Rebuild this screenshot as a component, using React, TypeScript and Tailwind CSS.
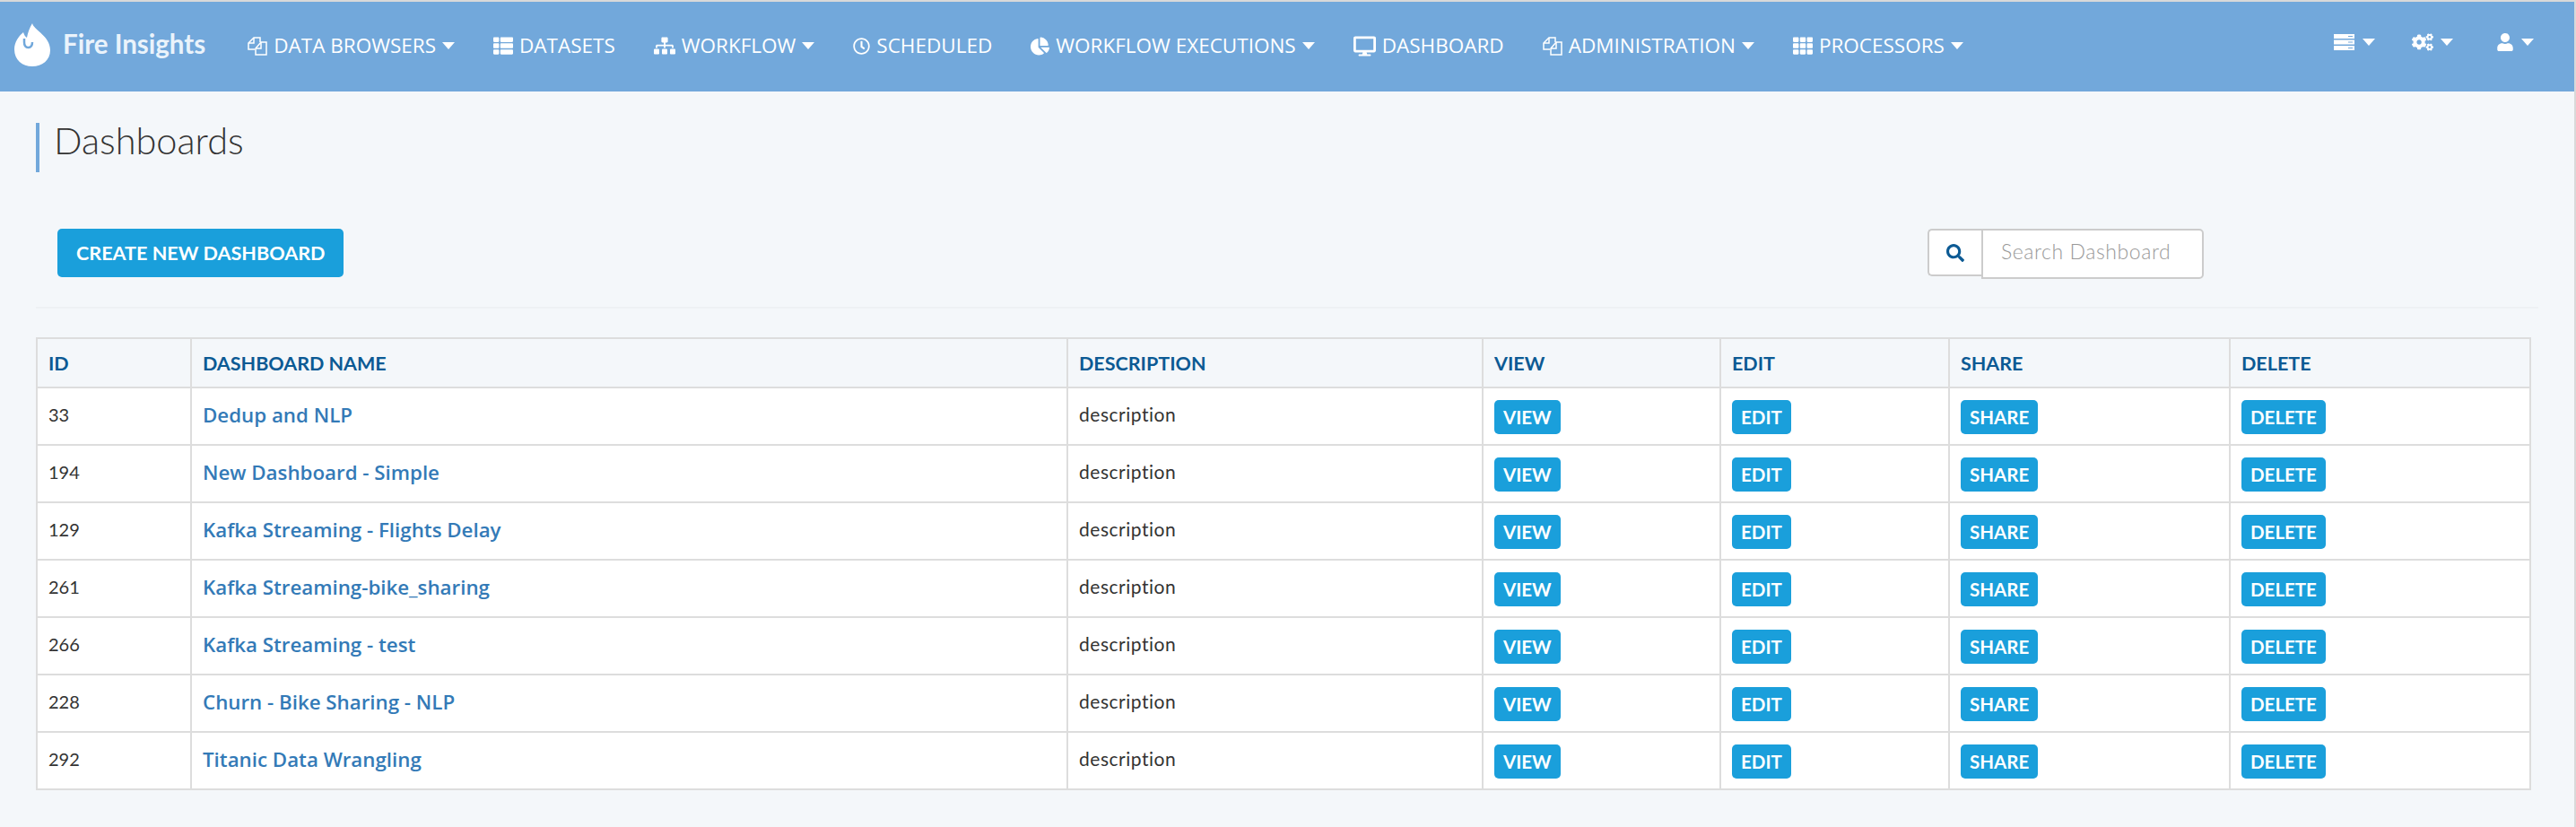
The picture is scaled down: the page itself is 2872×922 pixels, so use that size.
import { FaThList, FaSitemap, FaRegClock, FaChartPie, FaDesktop, FaTh, FaCogs, FaUser, FaSearch } from 'react-icons/fa'
import type { ReactNode } from 'react'

const rows = [
  { id: 33, name: 'Dedup and NLP' },
  { id: 194, name: 'New Dashboard - Simple' },
  { id: 129, name: 'Kafka Streaming - Flights Delay' },
  { id: 261, name: 'Kafka Streaming-bike_sharing' },
  { id: 266, name: 'Kafka Streaming - test' },
  { id: 228, name: 'Churn - Bike Sharing - NLP' },
  { id: 292, name: 'Titanic Data Wrangling' },
]

function FilesIcon() {
  return (
    <svg width="22" height="21" viewBox="0 0 22 21" fill="none" stroke="white" strokeWidth="1.5">
      <path d="M14 6V1H7L1 7V14H8" />
      <path d="M7 1V7H1" />
      <path d="M9 13L15 6H21V20H9Z" />
      <path d="M15 6V13H9" />
    </svg>
  )
}

function ServerIcon() {
  return (
    <svg width="23" height="18" viewBox="0 0 23 18" fill="white">
      <path fillRule="evenodd" d="M0 0H23V5H0ZM16 2V3H21V2ZM0 6.5H23V11.500H0ZM16 8.500V9.500H21V8.500ZM0 13H23V18H0ZM16 15V16H21V15Z" />
    </svg>
  )
}

function Caret() {
  return <span className="inline-block h-0 w-0 border-x-[7px] border-t-[8px] border-x-transparent border-t-white" />
}

function NavItem({ icon, label, caret }: { icon: ReactNode; label: string; caret?: boolean }) {
  return (
    <div className="flex items-center gap-[7px] text-[22.5px] font-medium text-white">
      {icon}
      <span>{label}</span>
      {caret && <Caret />}
    </div>
  )
}

function ActionButton({ label }: { label: string }) {
  return (
    <button className="mt-[2px] h-[38px] rounded-[5px] bg-[#1a9fdb] px-[10px] font-['Lato'] text-[20.5px] font-bold text-white">
      {label}
    </button>
  )
}

const cell = 'border-2 border-[#ddd] px-3'

export default function App() {
  return (
    <div className="min-h-[922px] border-t-2 border-r-2 border-[#d9d9d9] bg-[#f4f7fa] font-['Open_Sans',sans-serif]">
      <nav className="flex h-[100px] items-center bg-[#72a8db] pb-[5px] pl-4 pr-[45px]">
        <div className="flex items-center gap-[14px]">
          <svg width="40" height="48" viewBox="0 0 40 48" fill="white">
            <path d="M20 0C22 8 40 14 40 30C40 41 31 48 20 48C9 48 0 41 0 29C0 21 5 14 10 10C11 13 12 15 14 16C15 10 17 5 20 0Z" />
            <path d="M11 17V21Q11 27 15.500 27Q20 27 20 21" fill="none" stroke="#72a8db" strokeWidth="2.500" />
          </svg>
          <span className="font-['Lato'] text-[29.5px] font-bold text-[#eaf3fb]">Fire Insights</span>
        </div>
        <div className="ml-[47px] mt-[3px] flex items-center gap-[43px]">
          <NavItem icon={<FilesIcon />} label="DATA BROWSERS" caret />
          <NavItem icon={<FaThList size={22} />} label="DATASETS" />
          <NavItem icon={<FaSitemap size={24} />} label="WORKFLOW" caret />
          <NavItem icon={<FaRegClock size={19} />} label="SCHEDULED" />
          <NavItem icon={<FaChartPie size={21} />} label="WORKFLOW EXECUTIONS" caret />
          <NavItem icon={<FaDesktop size={25} />} label="DASHBOARD" />
          <NavItem icon={<FilesIcon />} label="ADMINISTRATION" caret />
          <NavItem icon={<FaTh size={22} />} label="PROCESSORS" caret />
        </div>
        <div className="mb-[6px] ml-auto flex items-center text-white">
          <div className="flex items-center gap-[9px]"><ServerIcon /><Caret /></div>
          <div className="ml-[41px] flex items-center gap-2"><FaCogs size={24} /><Caret /></div>
          <div className="ml-[48px] flex items-center gap-2"><FaUser size={20} /><Caret /></div>
        </div>
      </nav>

      <div className="px-10">
        <div className="mt-[35px] flex h-[55px] items-start border-l-4 border-[#72a8db] pl-4">
          <h1 className="font-['Lato'] text-[41.5px] font-light leading-[38px] text-[#333]">Dashboards</h1>
        </div>

        <div className="mt-[63px] flex h-[89px] items-start justify-between border-b-2 border-[#eef1f4] pl-6 pr-[373px]">
          <button className="h-[54px] rounded-[5px] bg-[#1a9fdb] px-[21px] font-['Lato'] text-[21.6px] font-bold text-white">
            CREATE NEW DASHBOARD
          </button>
          <div className="flex">
            <div className="flex h-[53px] w-[60px] items-center justify-center rounded-l-[5px] border-2 border-r-0 border-[#ccc] bg-white text-[#0c5a94]">
              <FaSearch size={20} />
            </div>
            <div className="flex h-[56px] w-[248px] items-start rounded-r-[5px] border-2 border-[#ccc] bg-white pl-5 pt-[6px] font-['Lato'] text-[23px] font-light tracking-wide text-[#999]">
              Search Dashboard
            </div>
          </div>
        </div>

        <table className="mt-[32px] w-[2782px] table-fixed border-collapse border-2 border-[#ddd] bg-white">
          <colgroup>
            <col className="w-[172px]" />
            <col className="w-[977px]" />
            <col className="w-[463px]" />
            <col className="w-[265px]" />
            <col className="w-[255px]" />
            <col className="w-[313px]" />
            <col />
          </colgroup>
          <thead className="bg-[#f4f7fa] font-['Lato'] text-[21.5px] font-bold text-[#0c5a94]">
            <tr className="h-[55px]">
              {['ID', 'DASHBOARD NAME', 'DESCRIPTION', 'VIEW', 'EDIT', 'SHARE', 'DELETE'].map((h) => (
                <th key={h} className={`${cell} pt-[2px] text-left font-bold`}>{h}</th>
              ))}
            </tr>
          </thead>
          <tbody>
            {rows.map((r) => (
              <tr key={r.id} className="h-[64px]">
                <td className={`${cell} pb-1 font-['Lato'] text-[20px] text-[#333]`}>{r.id}</td>
                <td className={`${cell} pb-[2px] text-[22.3px] font-semibold text-[#337ab7]`}>{r.name}</td>
                <td className={`${cell} pb-1 font-['Lato'] text-[21px] tracking-wide text-[#333]`}>description</td>
                <td className={cell}><ActionButton label="VIEW" /></td>
                <td className={cell}><ActionButton label="EDIT" /></td>
                <td className={cell}><ActionButton label="SHARE" /></td>
                <td className={cell}><ActionButton label="DELETE" /></td>
              </tr>
            ))}
          </tbody>
        </table>
      </div>
    </div>
  )
}
